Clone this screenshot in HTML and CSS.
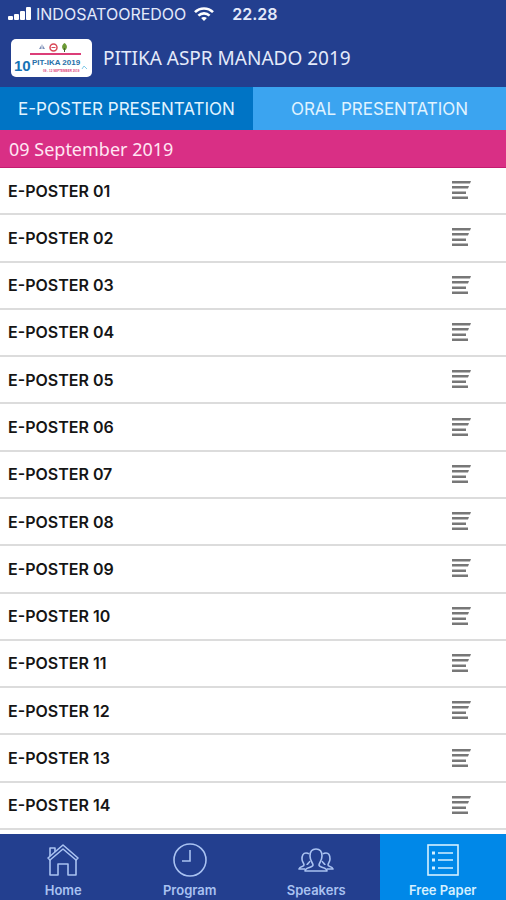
FILE: index.html
```html
<!DOCTYPE html>
<html lang="en">
<head>
    <meta charset="UTF-8">
    <meta name="viewport" content="width=device-width, initial-scale=1.0">
    <title>PITIKA ASPR MANADO 2019</title>
    <link rel="stylesheet" href="styles.css">
</head>
<body>

<header class="header">
    <div class="status-bar">
        <svg class="signal" width="24" height="14" viewBox="0 0 24 14" fill="#fff">
            <rect x="0" y="9" width="5" height="4" rx="1"/>
            <rect x="6" y="7" width="5" height="6" rx="1"/>
            <rect x="12" y="4" width="5" height="9" rx="1"/>
            <rect x="18" y="0" width="5" height="13" rx="1"/>
        </svg>
        <span class="carrier">INDOSATOOREDOO</span>
        <svg class="wifi" width="20" height="14" viewBox="0 0 20 14" fill="none" stroke="#fff" stroke-width="2.6">
            <path d="M1 5.2C6 .2 14 .2 19 5.2"/>
            <path d="M4.4 8.6c3.2-3 8-3 11.2 0"/>
            <path d="M10 14l-2.9-2.9c1.6-1.5 4.2-1.5 5.8 0z" fill="#fff" stroke="none"/>
        </svg>
        <span class="time">22.28</span>
    </div>
    <div class="title-bar">
        <svg class="logo" width="81" height="38" viewBox="0 0 81 38">
            <path d="M28 10l3-5 3 5z" fill="#7c8fb8"/>
            <path d="M31 5v5" stroke="#fff"/>
            <circle cx="42.5" cy="8.5" r="3.5" fill="#fff" stroke="#d94a58" stroke-width="1.5"/>
            <path d="M40.5 8.5h4" stroke="#d94a58"/>
            <path d="M53.5 4c3 2 3 5 1 7h-2c-2-2-2-5 1-7z" fill="#6c9a35"/>
            <path d="M53.5 9v4" stroke="#42602d"/>
            <rect x="19" y="14" width="51" height="2" fill="#dc3d78"/>
            <text class="logo-number" x="3" y="32">10</text>
            <text class="logo-name" x="21" y="26">PIT-IKA 2019</text>
            <text class="logo-note" x="32" y="33">09 - 12 SEPTEMBER 2019</text>
            <path d="M71 30l2-3 3 3" fill="none" stroke="#83cbe8"/>
        </svg>
        <h1 class="title">PITIKA ASPR MANADO 2019</h1>
    </div>
</header>

<div class="tabs">
    <button type="button" class="tab active">E-POSTER PRESENTATION</button>
    <button type="button" class="tab">ORAL PRESENTATION</button>
</div>

<h2 class="date">09 September 2019</h2>

<ul class="list" id="list"></ul>

<nav class="bottom-nav">
    <a class="nav-item" href="#home">
        <svg width="36" height="36" viewBox="0 0 36 36" fill="none" stroke="currentColor" stroke-width="1.6" stroke-linejoin="round">
            <path d="M3 16L18 3l15 13-2 2L18 7 5 18z"/>
            <path d="M5 14V6h5v4M5 18v15h8V22h10v11h8V18"/>
        </svg>
        <span>Home</span>
    </a>
    <a class="nav-item" href="#program">
        <svg width="36" height="36" viewBox="0 0 36 36" fill="none" stroke="currentColor" stroke-width="1.6">
            <circle cx="18" cy="18" r="16"/>
            <path d="M18 8v11h-8"/>
        </svg>
        <span>Program</span>
    </a>
    <a class="nav-item" href="#speakers">
        <svg width="36" height="36" viewBox="0 0 36 36" fill="none" stroke="currentColor" stroke-width="1.6" stroke-linejoin="round">
            <path d="M15 23c0-2-3-4-3-9 0-4 2-7 6-7s6 3 6 7c0 5-3 7-3 9 0 3 8 2 8 6H7c0-4 8-3 8-6z"/>
            <path d="M11 12c-1-1-2-1-3-1-3 0-4 3-4 6s2 4 2 6-4 1-5 4h6M9 23c0-1 2-2 3-4"/>
            <path d="M25 12c1-1 2-1 3-1 3 0 4 3 4 6s-2 4-2 6 4 1 5 4h-6M27 23c0-1-2-2-3-4"/>
        </svg>
        <span>Speakers</span>
    </a>
    <a class="nav-item active" href="#free-paper">
        <svg width="36" height="36" viewBox="0 0 36 36" fill="none" stroke="currentColor" stroke-width="1.6">
            <rect x="3" y="3" width="30" height="30"/>
            <path d="M13 11h15M13 18h15M13 26h15"/>
            <path d="M7 11h3M7 18h3M7 26h3" stroke-width="3"/>
        </svg>
        <span>Free Paper</span>
    </a>
</nav>

<script>
    const list = document.getElementById('list');

    // Poster rows
    for (let i = 1; i <= 14; i++) {
        const name = 'E-POSTER ' + String(i).padStart(2, '0');
        const row = document.createElement('li');
        row.classList.add('row');
        row.innerHTML = `
            <span class="row-name">${name}</span>
            <button type="button" class="row-button" aria-label="${name} details">
                <svg width="20" height="19" viewBox="0 0 20 19" fill="#777">
                    <path d="M0 0h19l-1 2.500H0zM0 5h17l-1 2.500H0zM0 10.500h14V13H0zM0 15.500h16V18H0z"/>
                </svg>
            </button>`;
        list.appendChild(row);
    }
</script>

</body>
</html>
```

FILE: styles.css
```css
* {
    box-sizing: border-box;
}
body {
    display: flex;
    flex-direction: column;
    min-height: 100vh;
    margin: 0;
    background-color: #fff;
    font-family: Inter, "Liberation Sans", sans-serif;
}
.header {
    background-color: #233f8f;
    color: #e4eafa;
}
.status-bar {
    display: flex;
    align-items: center;
    height: 28px;
    padding-left: 8px;
}
.carrier {
    margin-left: 4px;
    font-size: 16px;
}
.wifi {
    margin-left: 8px;
}
.time {
    margin-left: 18px;
    font-size: 16px;
    font-weight: 600;
}
.title-bar {
    display: flex;
    align-items: center;
    gap: 11px;
    height: 59px;
    padding: 0 11px;
}
.logo {
    border-radius: 5px;
    background-color: #fff;
}
.logo-number {
    font: bold 15px "Liberation Sans", sans-serif;
    fill: #1673b5;
}
.logo-name {
    font: bold 8px "Liberation Sans", sans-serif;
    fill: #2770a8;
}
.logo-note {
    font: bold 3px "Liberation Sans", sans-serif;
    fill: #dc3d78;
}
.title {
    margin: 0;
    font-family: "Noto Sans", sans-serif;
    font-size: 19px;
    font-weight: 400;
}
.tabs {
    display: flex;
}
.tab {
    flex: 1;
    height: 43px;
    padding: 0;
    border: 0;
    background-color: #3ba4f0;
    color: #e0f3ff;
    font-family: inherit;
    font-size: 17px;
}
.tab.active {
    background-color: #0074c5;
}
.date {
    height: 38px;
    margin: 0;
    padding: 0 9px;
    border-bottom: 1px solid #c41c70;
    background-color: #d92f85;
    color: #ffe6f3;
    font-family: "Noto Sans", sans-serif;
    font-size: 18px;
    font-weight: 400;
    line-height: 38px;
}
.list {
    display: flex;
    flex: 1;
    flex-direction: column;
    margin: 0;
    padding: 0 0 4px;
    list-style: none;
}
.row {
    display: flex;
    flex: 1;
    align-items: center;
    justify-content: space-between;
    min-height: 46px;
    padding: 0 34px 0 8px;
    border-bottom: 2px solid #dcdcdc;
}
.row-name {
    color: #151515;
    font-size: 16px;
    font-weight: 600;
}
.row-button {
    display: flex;
    padding: 0;
    border: 0;
    background: none;
}
.bottom-nav {
    display: flex;
    height: 66px;
}
.nav-item {
    display: flex;
    flex: 1;
    flex-direction: column;
    align-items: center;
    gap: 4px;
    padding-top: 8px;
    background-color: #233f8f;
    color: #a9c2f1;
    font-size: 13px;
    font-weight: 600;
    line-height: 16px;
    text-decoration: none;
}
.nav-item.active {
    background-color: #0088e8;
    color: #d5f0ff;
}
```
